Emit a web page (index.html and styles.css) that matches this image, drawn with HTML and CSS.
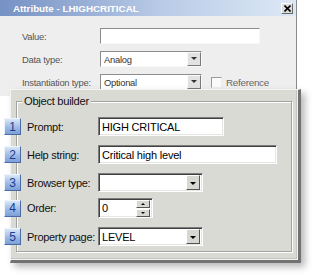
FILE: index.html
```html
<!DOCTYPE html>
<html lang="en">
<head>
    <meta charset="UTF-8">
    <meta name="viewport" content="width=device-width, initial-scale=1.0">
    <title>Attribute - LHIGHCRITICAL</title>
    <link rel="stylesheet" href="styles.css">
</head>
<body>

    <div id="stage">
        <!-- dialog behind -->
        <div class="dialog">
            <div class="titlebar">
                <span class="title">Attribute - LHIGHCRITICAL</span>
                <span class="close">
                    <svg width="7" height="7" viewBox="0 0 7 7"><path d="M0.5 0.5L6.5 6.5M6.5 0.5L0.5 6.5" stroke="#000" stroke-width="1.6"/></svg>
                </span>
            </div>
            <div class="form">
                <span class="form-label">Value:</span>
                <div class="field field-value"></div>

                <span class="form-label">Data type:</span>
                <div class="combo combo-sm"><span class="combo-text">Analog</span><span class="drop"></span></div>

                <span class="form-label">Instantiation type:</span>
                <div class="inline">
                    <div class="combo combo-sm"><span class="combo-text">Optional</span><span class="drop"></span></div>
                    <span class="check"></span>
                    <span class="check-label">Reference</span>
                </div>
            </div>
        </div>

        <!-- zoomed part on top -->
        <div class="builder">
            <div class="group">
                <div class="caption">Object builder</div>

                <div class="row">
                    <span class="badge">1</span>
                    <span class="row-label">Prompt:</span>
                    <div class="box box-prompt">HIGH CRITICAL</div>
                </div>
                <div class="row">
                    <span class="badge">2</span>
                    <span class="row-label">Help string:</span>
                    <div class="box box-help">Critical high level</div>
                </div>
                <div class="row">
                    <span class="badge">3</span>
                    <span class="row-label">Browser type:</span>
                    <div class="box box-select"><span class="box-text"></span><span class="drop drop-lg"></span></div>
                </div>
                <div class="row row-order">
                    <span class="badge">4</span>
                    <span class="row-label">Order:</span>
                    <div class="box box-spin">
                        <span class="box-text">0</span>
                        <span class="spin">
                            <span class="spin-btn"><i class="arr-up"></i></span>
                            <span class="spin-btn"><i class="arr-down"></i></span>
                        </span>
                    </div>
                </div>
                <div class="row">
                    <span class="badge">5</span>
                    <span class="row-label">Property page:</span>
                    <div class="box box-select"><span class="box-text">LEVEL</span><span class="drop drop-lg"></span></div>
                </div>
            </div>
        </div>
    </div>

</body>
</html>
```

FILE: styles.css
```css
body{
    margin: 0;
    background: #fff;
    font-family: "Liberation Sans", Arial, sans-serif;
}

#stage{
    position: relative;
    width: 322px;
    height: 275px;
    overflow: hidden;
}

/* ---------- dialog behind ---------- */
.dialog{
    width: 296px;
    height: 96px;
    background: #eeeeee;
    border-right: 1px solid #8a8a8a;
}

.titlebar{
    display: flex;
    align-items: center;
    justify-content: space-between;
    height: 16px;
    padding: 0 3px 0 13px;
    background: linear-gradient(to right, #7691c4, #b9cbe6 55%, #dde8f6);
}

.title{
    color: #fff;
    font-weight: bold;
    font-size: 9.8px;
    white-space: nowrap;
}

.close{
    display: flex;
    align-items: center;
    justify-content: center;
    width: 10px;
    height: 9px;
    background: #dcdcdc;
    border: 1px solid;
    border-color: #fff #6a6a6a #6a6a6a #fff;
}

.form{
    display: grid;
    grid-template-columns: 78px auto;
    align-items: center;
    row-gap: 7px;
    padding: 12px 0 0 22px;
    font-size: 9.4px;
    letter-spacing: -0.25px;
    color: #555;
    white-space: nowrap;
}

.field{
    height: 14px;
    background: #fff;
    border: 1px solid;
    border-color: #8c8c8c #f8f8f8 #f8f8f8 #8c8c8c;
}
.field-value{
    width: 158px;
}

.combo{
    display: flex;
    align-items: center;
    height: 14px;
    background: #fff;
    border: 1px solid;
    border-color: #8c8c8c #f8f8f8 #f8f8f8 #8c8c8c;
    color: #333;
}
.combo-sm{
    width: 100px;
}
.combo-text{
    flex: 1;
    padding-left: 3px;
}

.drop{
    position: relative;
    width: 12px;
    height: 12px;
    background: #e2e2e2;
    border: 1px solid;
    border-color: #fafafa #7a7a7a #7a7a7a #fafafa;
}
.drop::after{
    content: "";
    position: absolute;
    left: 50%;
    top: 50%;
    margin: -2px 0 0 -3px;
    border-left: 3px solid transparent;
    border-right: 3px solid transparent;
    border-top: 3px solid #333;
}

.inline{
    display: flex;
    align-items: center;
}
.check{
    width: 9px;
    height: 9px;
    margin-left: 9px;
    background: #fafafa;
    border: 1px solid;
    border-color: #9a9a9a #eee #eee #9a9a9a;
}
.check-label{
    margin-left: 4px;
    color: #666;
    font-size: 9.8px;
}

/* ---------- builder panel ---------- */
.builder{
    position: absolute;
    left: 10px;
    top: 89px;
    width: 291px;
    height: 174px;
    padding: 11px 6px 0 5px;
    box-sizing: border-box;
    background: #dadad5;
    border-top: 1px solid #f4f4f2;
    border-left: 1px solid #f4f4f2;
    border-right: 3px solid #727272;
    border-bottom: 3px solid #727272;
    box-shadow: inset -1px -1px 0 #f2f2ef, inset -2px -2px 0 #c4c4c0, 4px 4px 7px rgba(0,0,0,0.28);
    font-size: 11px;
    white-space: nowrap;
}

.group{
    height: 149px;
    border: 1px solid #a2a2a0;
    box-shadow: inset 1px 1px 0 #fff, 1px 1px 0 #fff;
}

.caption{
    width: fit-content;
    margin: -7px 0 0 5px;
    padding: 0 2px;
    background: #dadad5;
    font-size: 11.2px;
    letter-spacing: -0.3px;
    color: #111;
}

.row{
    display: flex;
    align-items: center;
    height: 19px;
    margin-top: 9px;
}
.caption + .row{
    margin-top: 10px;
}
.row-order{
    margin-top: 6px;
    height: 20px;
}

.badge{
    width: 15px;
    height: 15px;
    margin-left: -13px;
    display: flex;
    align-items: center;
    justify-content: center;
    background: linear-gradient(#dbe7f8, #9dbbe6 55%, #7c9fd6);
    border: 1px solid;
    border-color: #eef4fc #4b6ba8 #4b6ba8 #eef4fc;
    color: #1d3b8e;
    font-size: 12px;
}

.row-label{
    width: 71px;
    margin-left: 6px;
    letter-spacing: -0.3px;
    color: #111;
}

.box{
    display: flex;
    align-items: center;
    height: 100%;
    box-sizing: border-box;
    padding-left: 3px;
    background: #fff;
    border: 1px solid;
    border-color: #7d7d7d #fff #fff #7d7d7d;
    box-shadow: inset 1px 1px 0 #404040, inset -1px -1px 0 #e6e6e2;
    color: #000;
    font-size: 11px;
    letter-spacing: -0.2px;
}
.box-prompt{
    width: 126px;
}
.box-help{
    width: 179px;
}
.box-select{
    width: 105px;
    padding-right: 2px;
}
.box-spin{
    width: 55px;
    padding-right: 2px;
}
.box-text{
    flex: 1;
}

.drop-lg{
    width: 12px;
    height: 13px;
    background: #d8d8d2;
    border-color: #fff #555 #555 #fff;
}
.drop-lg::after{
    margin: -1px 0 0 -3px;
    border-top-color: #000;
}

.spin{
    display: flex;
    flex-direction: column;
    gap: 1px;
}
.spin-btn{
    position: relative;
    width: 12px;
    height: 6px;
    background: #d8d8d2;
    border: 1px solid;
    border-color: #fff #555 #555 #fff;
}
.spin-btn i{
    position: absolute;
    left: 50%;
    top: 50%;
    margin: -1px 0 0 -2px;
    border-left: 2px solid transparent;
    border-right: 2px solid transparent;
}
.arr-up{
    border-bottom: 2px solid #000;
}
.arr-down{
    border-top: 2px solid #000;
}
```
